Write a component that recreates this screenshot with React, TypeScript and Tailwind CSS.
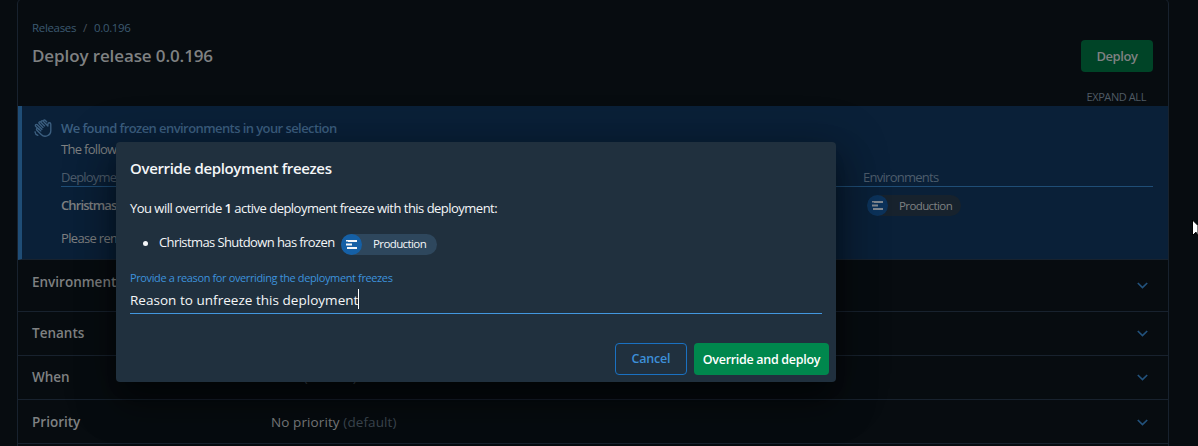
import React from 'react';

function WavingHand() {
  return (
    <svg
      className="h-[18px] w-[18px] shrink-0 text-[#3c5f80]"
      viewBox="0 0 18 18"
      fill="none"
      stroke="currentColor"
      strokeWidth="1.350"
      strokeLinecap="round"
      strokeLinejoin="round"
    >
      <path d="M9 8.400 5.200 4.600a1.100 1.100 0 0 1 1.500-1.600l3.900 3.900M8.200 4.500 7.400 3.700A1.100 1.100 0 0 1 9 2.100l4.900 4.900V5.200c0-.9.6-1.500 1.450-1.500s1.450.6 1.450 1.500v6.300a5.600 5.600 0 0 1-9.600 4L2.900 11.200a1.100 1.100 0 0 1 1.600-1.600l2.300 2.300" />
      <path d="m7.900 10.300-4.600-4.600a1.100 1.100 0 0 0-1.600 1.600l3.200 3.200M9.600 1.300c.8-.5 1.400-.2 2 .4l1 1M1 12.800c.2 1.700 1.200 3 2.900 3.600" />
    </svg>
  );
}

function EnvironmentGlyph({ className }: { className: string }) {
  return (
    <svg className={className} width="11" height="9" viewBox="0 0 11 9" fill="currentColor">
      <path d="M2 0h9v2H2zM0 3.500h6v2H0zM1 7h10v2H1zM0 0h2v1.500H0z" />
    </svg>
  );
}

function Chevron() {
  return (
    <svg className="h-[7px] w-[11px] text-[#22527c]" viewBox="0 0 11 7" fill="none" stroke="currentColor" strokeWidth="1.700">
      <path d="m.8 1 4.700 4.500L10.200 1" />
    </svg>
  );
}

type RowProps = { label: string; height: string; labelOffset?: string; value?: React.ReactNode };

function SectionRow({ label, height, labelOffset = '', value }: RowProps) {
  return (
    <div className={`flex items-center border-b border-[#18222e] pl-3.5 pr-5 ${height}`}>
      <div className={`w-[239px] text-[13.5px] font-semibold text-[#7f8182] ${labelOffset}`}>{label}</div>
      <div className="flex-1 text-[13.5px] tracking-[0.1px] text-[#7f8182]">{value}</div>
      <Chevron />
    </div>
  );
}

function Banner() {
  return (
    <div className="flex h-[154px] border-b border-l-4 border-b-[#18222e] border-l-[#1f4d76] bg-[#0a2038] pl-3 pr-[15px] pt-[13px]">
      <WavingHand />
      <div className="ml-[9px] flex-1 text-[13px] leading-[18px] text-[#7f8182]">
        <div className="text-[13px] font-semibold tracking-[-0.58px] text-[#3c5f80]">
          We found frozen environments in your selection
        </div>
        <div className="mt-[3px] tracking-[-0.7px]">The following deployment freezes are active:</div>
        <div className="mt-[11px] flex border-b border-[#1f4d76] leading-[17px] text-[#4d5d6c]">
          <div className="w-[802px] tracking-[-0.8px]">Deployment Freeze</div>
          <div className="tracking-[-0.73px]">Environments</div>
        </div>
        <div className="flex h-[37px] items-center">
          <div className="w-[806px] pb-0.5 font-semibold tracking-[-0.9px]">Christmas Shutdown</div>
          <div className="flex h-[21px] items-center rounded-full bg-[#17222d] pr-[9px] text-[11.500px] tracking-[-0.6px]">
            <span className="mr-[11px] flex h-[21px] w-[21px] items-center justify-center rounded-full bg-[#0c325a]">
              <EnvironmentGlyph className="text-[#808890]" />
            </span>
            Production
          </div>
        </div>
        <div className="mt-[5px] tracking-[-0.67px]">Please remove the frozen environments to continue.</div>
      </div>
    </div>
  );
}

function OverrideDialog() {
  return (
    <div className="absolute left-[116px] top-[142px] flex h-[240px] w-[720px] flex-col rounded bg-[#20303e] px-3.5 text-[#f4f6f8] shadow-[0_11px_15px_-7px_rgba(0,0,0,0.2),0_24px_38px_3px_rgba(0,0,0,0.3),0_9px_46px_8px_rgba(0,0,0,0.25)]">
      <h2 className="mt-[15px] text-[15px] font-semibold leading-[22px] tracking-[-0.34px]">Override deployment freezes</h2>
      <p className="mt-5 text-[13px] leading-[18px] tracking-[-0.52px]">
        You will override <b className="font-semibold">1</b> active deployment freeze with this deployment:
      </p>
      <ul className="mt-[15px] flex h-[22px] items-center text-[13px]">
        <li className="flex items-center">
          <span className="ml-[13px] mr-[11px] h-[5px] w-[5px] rounded-full bg-[#f4f6f8]" />
          <span className="w-[182px] tracking-[-0.6px]">Christmas Shutdown has frozen</span>
          <span className="mt-0.5 flex h-[21px] items-center rounded-full bg-[#2e475d] pr-[11px] text-[11.500px] tracking-[-0.6px]">
            <span className="mr-[11px] flex h-[21px] w-[21px] items-center justify-center rounded-full bg-[#1560a6]">
              <EnvironmentGlyph className="text-[#f4f6f8]" />
            </span>
            Production
          </span>
        </li>
      </ul>
      <label className="mt-4 text-[11px] leading-4 tracking-[-0.38px] text-[#3d92dc]">
        Provide a reason for overriding the deployment freezes
      </label>
      <div className="mt-0.5 flex h-[26px] items-center border-b border-[#4297df] text-[13.500px] tracking-[0.03px]">
        Reason to unfreeze this deployment
        <span className="mb-1 h-5 w-px bg-white" />
      </div>
      <div className="-mr-[7px] mt-[29px] flex justify-end gap-[7px] text-[12.500px] font-semibold">
        <button className="h-8 w-[72px] rounded border border-[#1a71c2] pt-px tracking-[-0.2px] text-[#3d8fd8]">Cancel</button>
        <button className="h-8 w-[135px] rounded bg-[#00874d] pt-0.5 tracking-[-0.3px] text-white">Override and deploy</button>
      </div>
    </div>
  );
}

export default function App() {
  return (
    <div className="relative h-[446px] w-[1198px] overflow-hidden bg-[#070c10] font-['Open_Sans','Liberation_Sans',sans-serif]">
      <div className="-mt-0.5 ml-[17px] h-[460px] w-[1152px] rounded-md border border-[#18222e]">
        <div className="flex h-[107px] justify-between pl-3.5 pr-[15px]">
          <div className="pt-[21px]">
            <div className="flex text-[11.500px] leading-4 tracking-[-0.33px] text-[#3c5a70]">
              <span>Releases</span>
              <span className="mx-[7px] text-[#47525c]">/</span>
              <span>0.0.196</span>
            </div>
            <h1 className="mt-2 text-[17px] font-semibold leading-6 tracking-[-0.11px] text-[#7f8182]">Deploy release 0.0.196</h1>
          </div>
          <div className="flex flex-col items-end pt-[41px]">
            <button className="h-8 w-[72px] rounded bg-[#004427] pt-px text-[13px] font-semibold tracking-[-0.42px] text-[#7f8182]">
              Deploy
            </button>
            <div className="mr-[7px] mt-[17px] text-[11px] leading-4 tracking-[-0.41px] text-[#4f5a64]">EXPAND ALL</div>
          </div>
        </div>
        <Banner />
        <SectionRow label="Environments" height="h-[52px]" labelOffset="pb-1.5" />
        <SectionRow label="Tenants" height="h-11" />
        <SectionRow label="When" height="h-11" value={<>Now <span className="text-[#3f4a54]">(default)</span></>} />
        <SectionRow label="Priority" height="h-11 pt-0.5" value={<>No priority <span className="text-[#3f4a54]">(default)</span></>} />
      </div>
      <OverrideDialog />
      <svg className="absolute left-[1192px] top-[220px]" width="6" height="18" viewBox="0 0 6 18">
        <path d="M.5 0v15.500L4 12.200 6 16V5.500z" fill="#fff" stroke="#000" strokeWidth="1" />
      </svg>
    </div>
  );
}
